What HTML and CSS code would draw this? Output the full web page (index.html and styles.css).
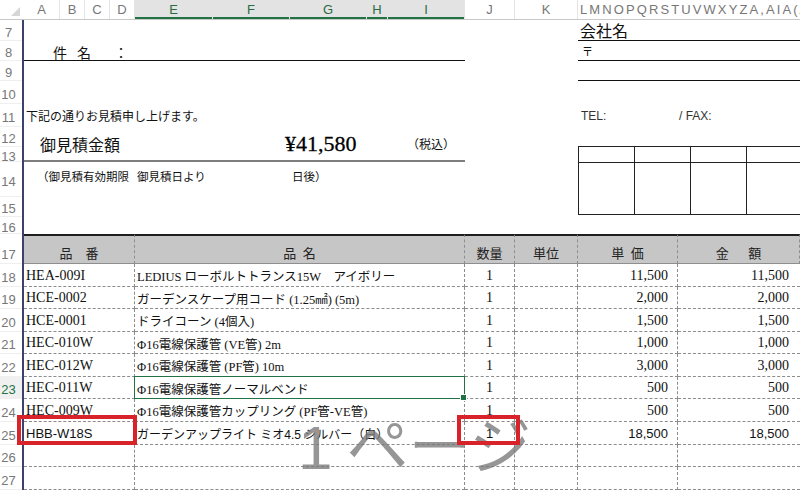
FILE: index.html
```html
<!DOCTYPE html>
<html lang="ja">
<head>
<meta charset="utf-8">
<title>御見積書</title>
<link rel="stylesheet" href="styles.css">
</head>
<body>
<div class="app">
  <div class="corner"><svg width="9" height="9" viewBox="0 0 9 9"><polygon points="9,0 9,9 0,9" fill="#d6d6d6"/></svg></div>
  <div class="colhdr">
    <div class="ch w36">A</div>
    <div class="ch w25">B</div>
    <div class="ch w25">C</div>
    <div class="ch w25">D</div>
    <div class="ch w78 on">E</div>
    <div class="ch w77 on">F</div>
    <div class="ch w77 on">G</div>
    <div class="ch w21 on">H</div>
    <div class="ch w77 on">I</div>
    <div class="ch w50">J</div>
    <div class="ch w63">K</div>
    <div class="ch rest">LMNOPQRSTUVWXYZA,AIA(AIA</div>
  </div>
  <div class="rowhdr">
    <div class="rh h21">7</div>
    <div class="rh h20">8</div>
    <div class="rh h20">9</div>
    <div class="rh h23">10</div>
    <div class="rh h23">11</div>
    <div class="rh h20">12</div>
    <div class="rh h15">13</div>
    <div class="rh h35">14</div>
    <div class="rh h20">15</div>
    <div class="rh h17">16</div>
    <div class="rh h30 low">17</div>
    <div class="rh h23">18</div>
    <div class="rh h22">19</div>
    <div class="rh h23">20</div>
    <div class="rh h22">21</div>
    <div class="rh h23">22</div>
    <div class="rh h22 cur">23</div>
    <div class="rh h23">24</div>
    <div class="rh h23">25</div>
    <div class="rh h22">26</div>
    <div class="rh h23">27</div>
  </div>
  <div class="sheet">
    <div class="top">
      <div class="subject"><span class="s1">件</span><span class="s2">名</span><span class="s3">：</span></div>
      <div class="company">会社名</div>
      <div class="zip">〒</div>
      <div class="addr"></div>
      <div class="intro">下記の通りお見積申し上げます。</div>
      <div class="tel"><span class="tel-l">TEL:</span><span>/ FAX:</span></div>
      <div class="amount"><span class="am-l">御見積金額</span><span class="am-v">¥41,580</span><span class="am-t">（税込）</span></div>
      <div class="validity"><span class="va-l">（御見積有効期限<span class="va-g">御見積日より</span></span><span>日後）</span></div>
      <div class="stamp">
        <div class="sc"></div><div class="sc"></div><div class="sc"></div><div class="sc"></div>
        <div class="sc"></div><div class="sc"></div><div class="sc"></div><div class="sc"></div>
      </div>
    </div>
    <div class="tbl">
      <div class="th">品　番</div>
      <div class="th">品&ensp;名</div>
      <div class="th">数量</div>
      <div class="th">単位</div>
      <div class="th">単&ensp;価</div>
      <div class="th">金&emsp;&ensp;額</div>

      <div class="td code">HEA-009I</div>
      <div class="td name">LEDIUS ローボルトトランス15W　アイボリー</div>
      <div class="td qty">1</div>
      <div class="td"></div>
      <div class="td num">11,500</div>
      <div class="td num last">11,500</div>

      <div class="td code">HCE-0002</div>
      <div class="td name">ガーデンスケープ用コード (1.25㎟) (5m)</div>
      <div class="td qty">1</div>
      <div class="td"></div>
      <div class="td num">2,000</div>
      <div class="td num last">2,000</div>

      <div class="td code">HCE-0001</div>
      <div class="td name">ドライコーン (4個入)</div>
      <div class="td qty">1</div>
      <div class="td"></div>
      <div class="td num">1,500</div>
      <div class="td num last">1,500</div>

      <div class="td code">HEC-010W</div>
      <div class="td name">Φ16電線保護管 (VE管) 2m</div>
      <div class="td qty">1</div>
      <div class="td"></div>
      <div class="td num">1,000</div>
      <div class="td num last">1,000</div>

      <div class="td code">HEC-012W</div>
      <div class="td name">Φ16電線保護管 (PF管) 10m</div>
      <div class="td qty">1</div>
      <div class="td"></div>
      <div class="td num">3,000</div>
      <div class="td num last">3,000</div>

      <div class="td code">HEC-011W</div>
      <div class="td name sel">Φ16電線保護管ノーマルベンド</div>
      <div class="td qty">1</div>
      <div class="td"></div>
      <div class="td num">500</div>
      <div class="td num last">500</div>

      <div class="td code">HEC-009W</div>
      <div class="td name">Φ16電線保護管カップリング (PF管-VE管)</div>
      <div class="td qty">1</div>
      <div class="td"></div>
      <div class="td num">500</div>
      <div class="td num last">500</div>

      <div class="td code sans">HBB-W18S</div>
      <div class="td name sans">ガーデンアップライト ミオ4.5 シルバー（白）</div>
      <div class="td qty sans">1</div>
      <div class="td"></div>
      <div class="td num sans">18,500</div>
      <div class="td num last sans">18,500</div>

      <div class="td"></div><div class="td"></div><div class="td"></div><div class="td"></div><div class="td"></div><div class="td last"></div>
      <div class="td"></div><div class="td"></div><div class="td"></div><div class="td"></div><div class="td"></div><div class="td last"></div>
    </div>
  </div>
  <div class="watermark"><span class="wm-num">1</span>ページ</div>
  <div class="mark mark-code"></div>
  <div class="mark mark-qty"></div>
</div>
</body>
</html>
```

FILE: styles.css
```css
* { box-sizing: border-box; margin: 0; padding: 0; }
html, body { width: 800px; height: 490px; overflow: hidden; background: #fff; }
body { font-family: "Liberation Sans", "Noto Sans CJK JP", sans-serif; color: #111; }

.app {
  position: relative;
  display: grid;
  grid-template-columns: 24px 776px;
  grid-template-rows: 20px 470px;
  width: 800px;
  height: 490px;
  overflow: hidden;
}

/* column header */
.corner {
  border-bottom: 1px solid #c9c9c9;
  display: flex;
  align-items: flex-end;
  justify-content: flex-end;
  padding: 0 4px 3px 0;
}
.colhdr {
  display: flex;
  border-bottom: 1px solid #c9c9c9;
  overflow: hidden;
}
.ch {
  flex: none;
  height: 19px;
  display: flex;
  align-items: center;
  justify-content: center;
  font-size: 13px;
  color: #777;
  border-right: 1px solid #e4e4e4;
}
.ch.on {
  background: #e3e3e3;
  color: #2a6a45;
  box-shadow: inset 0 -2px 0 #217346;
}
.w36 { width: 36px; }
.w25 { width: 25px; }
.w78 { width: 78px; }
.w77 { width: 77px; }
.w21 { width: 21px; }
.w50 { width: 50px; }
.w63 { width: 63px; }
.ch.rest {
  width: 222px;
  justify-content: flex-start;
  padding-left: 2px;
  letter-spacing: 2.1px;
  white-space: nowrap;
  overflow: hidden;
  border-right: none;
}

/* row header */
.rowhdr {
  display: flex;
  flex-direction: column;
  border-right: 2px solid #3b4270;
}
.rh {
  flex: none;
  display: flex;
  align-items: center;
  justify-content: center;
  padding: 4px 5px 0 0;
  font-size: 13px;
  color: #777;
  border-bottom: 1px solid #efefef;
}
.rh.low { align-items: flex-end; padding-bottom: 1px; }
.rh.cur { color: #217346; background: #f0f0f0; }
.h15 { height: 15px; }
.h17 { height: 17px; }
.h20 { height: 20px; }
.h21 { height: 21px; }
.h22 { height: 22px; }
.h23 { height: 23px; }
.h30 { height: 30px; }
.h35 { height: 35px; }

/* sheet */
.sheet {
  position: relative;
  overflow: hidden;
}
.top {
  display: grid;
  grid-template-columns: 111px 330px 113px 222px;
  grid-template-rows: 21px 20px 20px 23px 23px 20px 15px 35px 20px 17px;
}
.subject {
  grid-column: 1 / 3;
  grid-row: 2;
  border-bottom: 1px solid #111;
  display: flex;
  align-items: center;
  padding: 2px 0 0 29px;
  font-size: 14px;
}
.subject .s2 { margin-left: 10px; }
.subject .s3 { margin-left: 23px; }
.company {
  grid-column: 4;
  grid-row: 1;
  border-bottom: 1px solid #111;
  display: flex;
  align-items: center;
  padding-left: 2px;
  font-size: 16px;
}
.zip {
  grid-column: 4;
  grid-row: 2;
  border-bottom: 1px solid #111;
  display: flex;
  align-items: center;
  padding: 0 0 0 4px;
  font-size: 11px;
}
.addr {
  grid-column: 4;
  grid-row: 3;
  border-bottom: 1px solid #111;
}
.intro {
  grid-column: 1 / 3;
  grid-row: 5;
  display: flex;
  align-items: center;
  padding-left: 2px;
  font-size: 12px;
}
.tel {
  grid-column: 4;
  grid-row: 5;
  display: flex;
  align-items: center;
  padding-left: 3px;
  font-size: 12px;
  color: #333;
}
.tel-l { width: 98px; }
.amount {
  grid-column: 1 / 3;
  grid-row: 6 / 8;
  border-bottom: 2px solid #7e7e7e;
  display: flex;
  align-items: center;
  padding-left: 16px;
}
.am-l { width: 245px; font-size: 16px; }
.am-v {
  width: 122px;
  font-family: "Liberation Serif", serif;
  font-size: 22px;
  color: #000;
  -webkit-text-stroke: 0.3px #000;
}
.am-t { font-size: 12px; font-family: "Noto Sans CJK JP", serif; }
.validity {
  grid-column: 1 / 3;
  grid-row: 8;
  display: flex;
  align-items: flex-start;
  padding: 6px 0 0 13px;
  font-size: 11.5px;
}
.va-l { width: 255px; }
.va-g { margin-left: 8px; }
.stamp {
  grid-column: 4;
  grid-row: 7 / 10;
  align-self: start;
  margin-top: -1px;
  height: 69px;
  display: grid;
  grid-template-columns: repeat(4, 56px);
  grid-template-rows: 16px 1fr;
  border-top: 1px solid #222;
  border-left: 1px solid #222;
}
.sc {
  border-right: 1px solid #222;
  border-bottom: 1px solid #222;
}

/* table */
.tbl {
  display: grid;
  grid-template-columns: 111px 330px 50px 63px 100px 122px;
  grid-template-rows: 30px 23px 22px 23px 22px 23px 22px 23px 23px 22px 23px;
}
.th {
  background: #c6c6c6;
  border-top: 2px solid #1f1f1f;
  border-bottom: 1px solid #8e8e8e;
  border-right: 1px dashed #8e8e8e;
  display: flex;
  align-items: center;
  justify-content: center;
  padding-top: 6px;
  font-family: "Noto Sans CJK JP", serif;
  font-size: 13px;
  color: #222;
}
.td {
  position: relative;
  border-right: 1px dashed #8c8c8c;
  border-bottom: 1px dashed #8c8c8c;
  display: flex;
  align-items: center;
  padding: 1px 2px 0;
  white-space: nowrap;
  font-family: "Liberation Serif", "Noto Sans CJK JP", serif;
  font-size: 14px;
  color: #111;
}
.td.name { font-size: 12.5px; }
.td.qty { justify-content: center; }
.td.num { justify-content: flex-end; padding-right: 9px; }
.td.num.last { padding-right: 11px; }
.td.last { border-right: none; }
.td.sans { font-family: "Liberation Sans", "Noto Sans CJK JP", sans-serif; font-size: 13px; }
.td.name.sans { font-size: 12px; }
.td.sel::after {
  content: "";
  position: absolute;
  left: -1px;
  top: -1px;
  right: -1px;
  bottom: -1px;
  border: 1px solid #217346;
}
.td.sel::before {
  content: "";
  position: absolute;
  right: -3px;
  bottom: -3px;
  width: 5px;
  height: 5px;
  background: #217346;
  border: 1px solid #fff;
  z-index: 2;
}

/* overlays */
.watermark {
  position: absolute;
  left: 298px;
  top: 411px;
  font-family: "Noto Sans CJK JP", sans-serif;
  font-size: 62px;
  line-height: 1;
  color: rgba(120, 120, 120, 0.78);
  white-space: nowrap;
  pointer-events: none;
}
.wm-num {
  font-family: "Liberation Sans", sans-serif;
  font-weight: normal;
  margin-right: 14px;
}
.mark {
  position: absolute;
  border: 4px solid #d9232a;
}
.mark-code { left: 17px; top: 415px; width: 120px; height: 30px; }
.mark-qty { left: 457px; top: 415px; width: 63px; height: 30px; }
```
